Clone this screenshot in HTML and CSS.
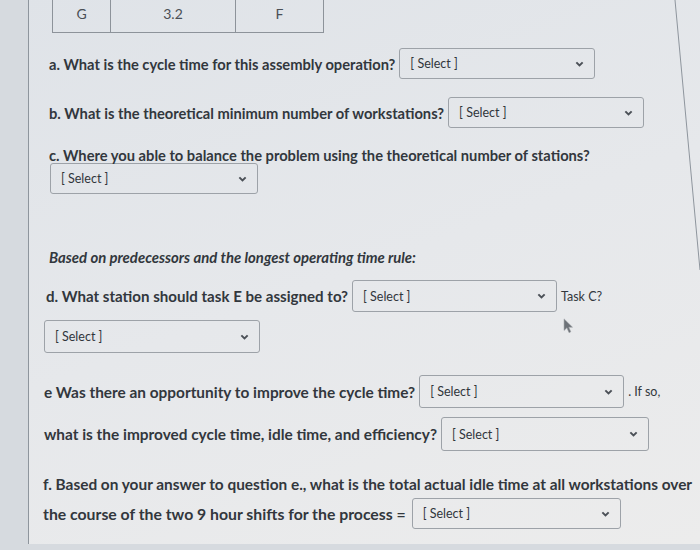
FILE: index.html
```html
<!DOCTYPE html>
<html lang="en">
<head>
    <meta charset="UTF-8">
    <meta name="viewport" content="width=device-width, initial-scale=1.0">
    <title>Quiz</title>
    <link rel="stylesheet" href="styles.css">
</head>
<body>
    <div class="screen">
        <div class="page">
            <table class="tasks">
                <tr>
                    <td class="c1">G</td>
                    <td class="c2">3.2</td>
                    <td class="c3">F</td>
                </tr>
            </table>

            <div class="row q-a">
                <span>a. What is the cycle time for this assembly operation?</span>
                <div class="select w196"><span>[ Select ]</span><svg viewBox="0 0 10 6"><path d="M1.5 1.2 L5 4.6 L8.5 1.2"/></svg></div>
            </div>

            <div class="row q-b">
                <span>b. What is the theoretical minimum number of workstations?</span>
                <div class="select w196"><span>[ Select ]</span><svg viewBox="0 0 10 6"><path d="M1.5 1.2 L5 4.6 L8.5 1.2"/></svg></div>
            </div>

            <p class="line q-c">c. Where you able to balance the problem using the theoretical number of stations?</p>
            <div class="select w208 q-c-sel"><span>[ Select ]</span><svg viewBox="0 0 10 6"><path d="M1.5 1.2 L5 4.6 L8.5 1.2"/></svg></div>

            <p class="line note">Based on predecessors and the longest operating time rule:</p>

            <div class="lower">
                <div class="row q-d">
                    <span>d. What station should task E be assigned to?</span>
                    <div class="select w205"><span>[ Select ]</span><svg viewBox="0 0 10 6"><path d="M1.5 1.2 L5 4.6 L8.5 1.2"/></svg></div>
                    <span class="small">Task C?</span>
                </div>
                <div class="select w216 q-d-sel"><span>[ Select ]</span><svg viewBox="0 0 10 6"><path d="M1.5 1.2 L5 4.6 L8.5 1.2"/></svg></div>

                <div class="row q-e">
                    <span>e Was there an opportunity to improve the cycle time?</span>
                    <div class="select w205"><span>[ Select ]</span><svg viewBox="0 0 10 6"><path d="M1.5 1.2 L5 4.6 L8.5 1.2"/></svg></div>
                    <span class="small">. If so,</span>
                </div>
                <div class="row q-e2">
                    <span>what is the improved cycle time, idle time, and efficiency?</span>
                    <div class="select w208"><span>[ Select ]</span><svg viewBox="0 0 10 6"><path d="M1.5 1.2 L5 4.6 L8.5 1.2"/></svg></div>
                </div>

                <p class="line q-f">f. Based on your answer to question e., what is the total actual idle time at all workstations over</p>
                <div class="row q-f2">
                    <span>the course of the two 9 hour shifts for the process =</span>
                    <div class="select w209"><span>[ Select ]</span><svg viewBox="0 0 10 6"><path d="M1.5 1.2 L5 4.6 L8.5 1.2"/></svg></div>
                </div>
            </div>
        </div>

        <svg class="cursor" viewBox="0 0 12 18"><path d="M1 1 L1 14 L4.2 11 L6.6 16.5 L8.6 15.6 L6.3 10.3 L10.5 10.3 Z"/></svg>
        <svg class="edge" viewBox="0 0 40 280"><line x1="2" y1="0" x2="27" y2="270"/></svg>
    </div>
</body>
</html>
```

FILE: styles.css
```css
* {
    box-sizing: border-box;
}

body {
    margin: 0;
    font-family: 'Lato', 'Open Sans', sans-serif;
    color: #32373d;
}

.screen {
    position: relative;
    width: 700px;
    height: 550px;
    overflow: hidden;
    background: #d6dadf;
}

.page {
    margin-left: 28px;
    height: 550px;
    padding-left: 20px;
    border-left: 1px solid #8e959d;
    background: linear-gradient(160deg, #dfe3e8 0%, #e6e8eb 50%, #ececec 100%);
    font-size: 14.7px;
    font-weight: 700;
}

.tasks {
    margin-left: 3px;
    margin-top: -6px;
    border-collapse: collapse;
    font-size: 14px;
    font-weight: 400;
    color: #4a4f55;
}

.tasks td {
    height: 38px;
    border: 1px solid #8d939a;
    text-align: center;
    vertical-align: middle;
}

.tasks .c1 { width: 58px; }
.tasks .c2 { width: 125px; }
.tasks .c3 { width: 88px; }

.row {
    display: flex;
    align-items: center;
    gap: 4px;
    white-space: nowrap;
}

.line {
    margin: 0;
    white-space: nowrap;
}

.select {
    display: flex;
    align-items: center;
    justify-content: space-between;
    height: 31px;
    padding: 0 10px 0 10px;
    border: 1px solid #9da2a8;
    border-radius: 3px;
    font-size: 12.5px;
    font-weight: 400;
    color: #30353b;
}

.select svg {
    width: 9px;
    height: 6px;
    fill: none;
    stroke: #4b5057;
    stroke-width: 2.2;
}

.w196 { width: 196px; }
.w205 { width: 205px; }
.w208 { width: 208px; }
.w209 { width: 209px; }
.w216 { width: 216px; }

.small {
    font-size: 12.5px;
    font-weight: 400;
}

.q-a { margin-top: 15px; }
.q-b { margin-top: 18px; }

.q-c {
    margin-top: 19px;
    line-height: 16px;
}

.q-c-sel {
    margin-left: 1px;
}

.note {
    margin-top: 54px;
    line-height: 18px;
    font-style: italic;
    font-size: 14.9px;
}

.lower {
    margin-left: -3px;
    font-size: 15.1px;
}

.q-d { margin-top: 14px; }
.q-d .select { height: 32px; }

.q-d-sel {
    margin-top: 8px;
    margin-left: -2px;
    height: 33px;
}

.q-e {
    margin-top: 22px;
    margin-left: -2px;
    font-size: 15.4px;
}
.q-e .select { height: 33px; }

.q-e2 {
    margin-top: 9px;
    margin-left: -2px;
    font-size: 15.4px;
}
.q-e2 .select { height: 34px; }

.q-f {
    margin-top: 23px;
    margin-left: -3px;
    line-height: 20px;
    font-size: 15.4px;
}

.q-f2 {
    margin-top: 4px;
    margin-left: -3px;
    gap: 6px;
    font-size: 15.8px;
}

.cursor {
    position: absolute;
    left: 563px;
    top: 318px;
    width: 11px;
    height: 16px;
    fill: #6d7278;
    stroke: #9a9ea3;
    stroke-width: 0.6;
}

.edge {
    position: absolute;
    left: 673px;
    top: 0;
    width: 40px;
    height: 280px;
    stroke: #8e959d;
    stroke-width: 1;
}
```
